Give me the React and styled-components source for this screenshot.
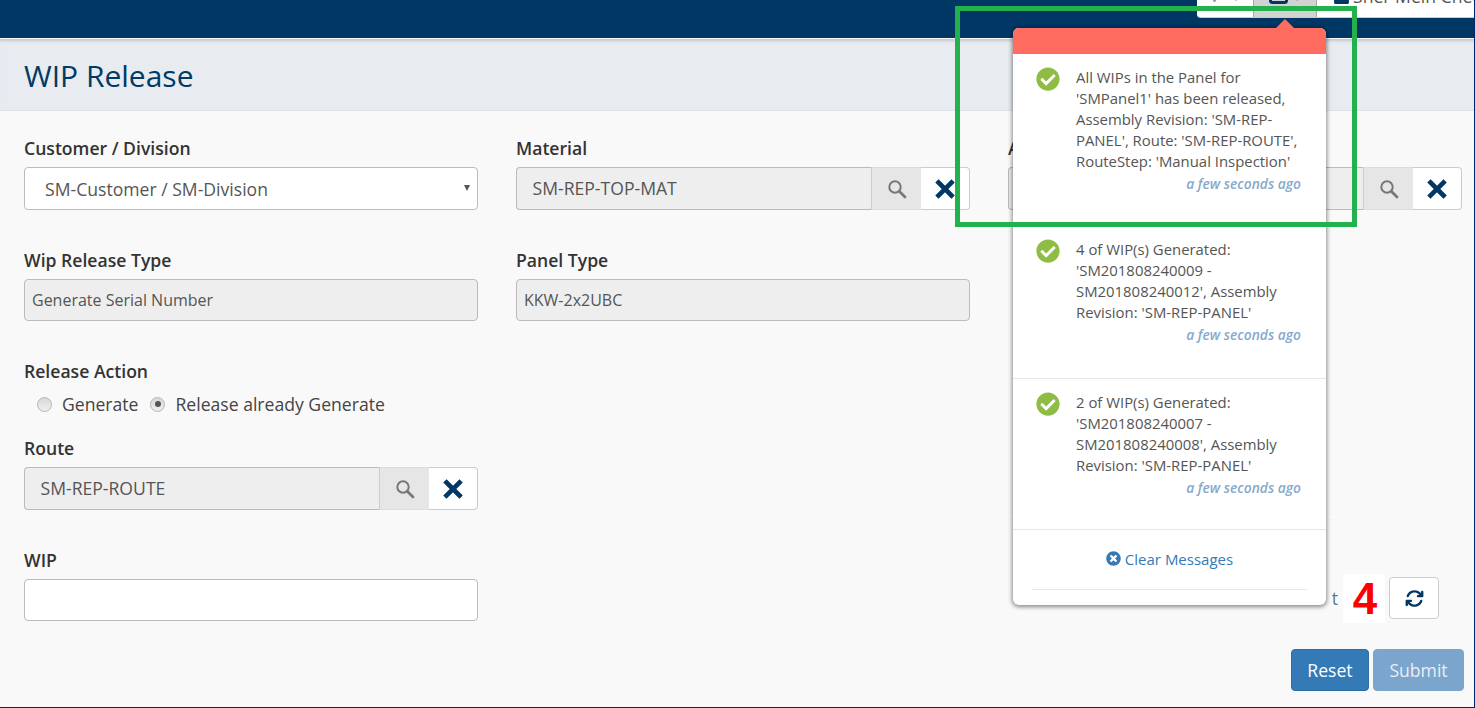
import React from "react";
import styled, { createGlobalStyle } from "styled-components";
import { FaCheckCircle, FaTimesCircle, FaUser } from "react-icons/fa";
import { FaArrowsRotate } from "react-icons/fa6";

const GlobalStyle = createGlobalStyle`
    html, body {
        margin: 0;
        padding: 0;
        height: 100%;
        background: #f9f9f9;
        overflow: hidden;
    }
    body {
        font-family: "Open Sans", "Liberation Sans", sans-serif;
        color: #333;
    }
`;

const Page = styled.div`
    position: relative;
    width: 1475px;
    height: 708px;
    box-sizing: border-box;
    overflow: hidden;
    background: #f9f9f9;
    border-right: 1px solid #00266b;
    border-bottom: 1px solid #00266b;
`;

const TopBar = styled.header`
    height: 38px;
    background: #003764;
    display: flex;
    justify-content: flex-end;
    align-items: flex-start;
`;

const NavBox = styled.nav`
    height: 18px;
    width: 277px;
    display: flex;
    background: #fff;
    border-radius: 0 0 0 4px;
    border-bottom: 1px solid #ccc;
    box-sizing: border-box;
    overflow: hidden;
`;

const NavTab = styled.div`
    width: ${(p) => p.$w}px;
    flex: none;
    display: flex;
    align-items: flex-start;
    justify-content: ${(p) => (p.$grow ? "flex-start" : "center")};
    gap: ${(p) => (p.$grow ? 3 : 7)}px;
    box-sizing: border-box;
    padding-left: ${(p) => (p.$grow ? 16 : 0)}px;
    background: ${(p) => (p.$active ? "#d2d2d2" : "#fff")};
    border-left: ${(p) => (p.$active ? "1px solid #aaa" : "none")};
    border-right: ${(p) => (p.$active ? "1px solid #aaa" : "none")};
    color: #003764;
    white-space: nowrap;
`;

const NavIconCut = styled.svg`
    flex: none;
    margin-top: ${(p) => p.$top}px;
`;

const NavUserText = styled.span`
    font-size: 17.6px;
    line-height: 18px;
    color: #555;
    margin-top: -13px;
`;

const TitleBar = styled.div`
    height: 72px;
    box-sizing: border-box;
    margin-top: 1px;
    padding: 16px 24px 0;
    background: #e8ebf0;
    border-top: 1px solid #c9ccd2;
    border-bottom: 1px solid #e0e2e6;
    box-shadow: inset 0 3px 3px -2px #c4c7cf;
`;

const Title = styled.h1`
    margin: 0;
    font-size: 30px;
    line-height: 40px;
    font-weight: 400;
    color: #003a66;
`;

const Form = styled.main`
    display: grid;
    grid-template-columns: repeat(3, 454px);
    column-gap: 38px;
    padding: 26px 0 0 24px;
`;

const Column = styled.div`
    display: flex;
    flex-direction: column;
`;

const Field = styled.div`
    height: ${(p) => p.$h}px;
    flex: none;
`;

const Label = styled.div`
    font-size: 17.6px;
    line-height: 22px;
    height: 22px;
    font-weight: 600;
    color: #333;
    margin-bottom: ${(p) => p.$mb ?? 8}px;
`;

const InputBase = styled.div`
    box-sizing: border-box;
    height: ${(p) => p.$h || 42}px;
    border: 1px solid #bbb;
    border-radius: 4px;
    display: flex;
    align-items: center;
    font-size: ${(p) => p.$fs || 17.6}px;
    color: #555;
    padding-left: ${(p) => p.$pl || 7}px;
    background: ${(p) => (p.$filled ? "#eee" : "#fff")};
`;

const SelectBox = styled(InputBase)`
    position: relative;
    padding-left: 20px;
`;

const Caret = styled.span`
    position: absolute;
    right: 7px;
    top: 17px;
    width: 0;
    height: 0;
    border-left: 3px solid transparent;
    border-right: 3px solid transparent;
    border-top: 6px solid #555;
`;

const LookupRow = styled.div`
    display: flex;
    height: 43px;
    box-sizing: border-box;
`;

const LookupInput = styled.div`
    flex: 1;
    min-width: 0;
    box-sizing: border-box;
    background: #eee;
    border: 1px solid #bbb;
    border-right: 1px solid #ccc;
    border-radius: 4px 0 0 4px;
    display: flex;
    align-items: center;
    padding: 0 0 1px 15.5px;
    font-size: 17.6px;
    color: #555;
`;

const SearchCell = styled.div`
    width: 49px;
    flex: none;
    box-sizing: border-box;
    background: #e6e6e6;
    border-top: 1px solid #ddd;
    border-bottom: 1px solid #ddd;
    display: flex;
    align-items: center;
    justify-content: center;
`;

const ClearCell = styled.div`
    width: 49px;
    flex: none;
    box-sizing: border-box;
    background: #fff;
    border: 1px solid #ccc;
    border-left: none;
    border-radius: 0 4px 4px 0;
    display: flex;
    align-items: center;
    justify-content: center;
`;

const RadioRow = styled.div`
    display: flex;
    align-items: center;
    padding-left: 13px;
    height: 22px;
    margin-top: 11px;
    margin-bottom: 22px;
    font-size: 17.6px;
    color: #444;
`;

const Radio = styled.span`
    width: 15px;
    height: 15px;
    box-sizing: border-box;
    border-radius: 50%;
    border: 1px solid #b5b5b5;
    background: linear-gradient(#d8d8d8, #efefef);
    margin-right: 10px;
    margin-left: ${(p) => p.$ml || 0}px;
    display: flex;
    align-items: center;
    justify-content: center;
    &::after {
        content: "";
        display: ${(p) => (p.$on ? "block" : "none")};
        width: 6px;
        height: 6px;
        border-radius: 50%;
        background: #555;
    }
`;

const RefreshRow = styled.div`
    display: flex;
    justify-content: flex-end;
    align-items: center;
    gap: 51px;
    padding-right: 23px;
`;

const CountText = styled.span`
    font-size: 17.6px;
    color: #5a7a94;
`;

const IconButton = styled.div`
    width: 50px;
    height: 42px;
    box-sizing: border-box;
    background: #fff;
    border: 1px solid #ccc;
    border-radius: 4px;
    display: flex;
    align-items: center;
    justify-content: center;
    color: #003764;
    font-size: 19px;
`;

const Actions = styled.div`
    display: flex;
    justify-content: flex-end;
    gap: 4px;
    margin-top: 30px;
    margin-right: -2px;
`;

const Button = styled.div`
    height: 42px;
    box-sizing: border-box;
    width: ${(p) => p.$w}px;
    padding-bottom: 1px;
    border-radius: 4px;
    background: ${(p) => (p.$off ? "#7ba5cc" : "#337ab7")};
    border: 1px solid ${(p) => (p.$off ? "#7ba5cc" : "#2e6da4")};
    color: ${(p) => (p.$off ? "#e8eff6" : "#fff")};
    font-size: 17.6px;
    display: flex;
    align-items: center;
    justify-content: center;
`;

const GlitchLine = styled.div`
    position: absolute;
    left: 1004px;
    top: 516px;
    width: 331px;
    height: 1px;
    background: #fff;
`;

const Popover = styled.aside`
    position: absolute;
    left: 1013px;
    top: 28px;
    width: 313px;
    height: 577px;
    background: #fff;
    border-radius: 6px;
    box-shadow: 0 1px 4px 1px rgba(0, 0, 0, 0.45);
    display: flex;
    flex-direction: column;
    &::before {
        content: "";
        position: absolute;
        left: 263px;
        top: -9px;
        border-left: 9px solid transparent;
        border-right: 9px solid transparent;
        border-bottom: 9px solid #ff6b5e;
    }
`;

const PopoverHead = styled.div`
    height: 26px;
    flex: none;
    background: #ff6b5e;
    border-radius: 6px 6px 0 0;
`;

const Message = styled.div`
    height: ${(p) => p.$h}px;
    flex: none;
    box-sizing: border-box;
    padding: 13px 25px 0 23px;
    display: flex;
    gap: 16px;
    border-bottom: 1px solid #e7e7e7;
`;

const CheckWrap = styled.div`
    flex: none;
    width: 24px;
    height: 24px;
    font-size: 24px;
    line-height: 0;
    color: #8fbc45;
`;

const MessageBody = styled.div`
    flex: 1;
    min-width: 0;
`;

const MessageText = styled.div`
    font-size: 14.9px;
    line-height: 21px;
    color: #555;
    white-space: pre-line;
`;

const TimeAgo = styled.div`
    text-align: right;
    font-size: 13.8px;
    line-height: 21px;
    margin-top: 1px;
    font-style: italic;
    font-weight: 600;
    color: #86a9cc;
`;

const ClearLink = styled.div`
    height: 60px;
    flex: none;
    margin: 0 19px;
    padding-bottom: 2px;
    box-sizing: border-box;
    border-bottom: 1px solid #e7e7e7;
    display: flex;
    align-items: center;
    justify-content: center;
    gap: 4px;
    font-size: 15px;
    color: #337ab7;
    svg {
        font-size: 15px;
    }
`;

const AnnotationBox = styled.div`
    position: absolute;
    left: 955px;
    top: 6px;
    width: 402px;
    height: 221px;
    box-sizing: border-box;
    border: 5px solid #22b14c;
`;

const StepBadge = styled.div`
    position: absolute;
    left: 1343px;
    top: 574px;
    width: 42px;
    height: 49px;
    padding-left: 2px;
    box-sizing: border-box;
    background: #fff;
    color: #f00;
    font-family: "Liberation Sans", sans-serif;
    font-weight: 700;
    font-size: 44px;
    line-height: 49px;
    text-align: center;
`;

const messages = [
    {
        h: 172,
        text: "All WIPs in the Panel for\n'SMPanel1' has been released,\nAssembly Revision: 'SM-REP-\nPANEL', Route: 'SM-REP-ROUTE',\nRouteStep: 'Manual Inspection'",
    },
    {
        h: 153,
        text: "4 of WIP(s) Generated:\n'SM201808240009 -\nSM201808240012', Assembly\nRevision: 'SM-REP-PANEL'",
    },
    {
        h: 151,
        text: "2 of WIP(s) Generated:\n'SM201808240007 -\nSM201808240008', Assembly\nRevision: 'SM-REP-PANEL'",
    },
];

function SearchIcon() {
    return (
        <svg width="20" height="20" viewBox="0 0 20 20" fill="none" stroke="#777">
            <circle cx="8" cy="8" r="5.7" strokeWidth="2" />
            <path d="M12.5 12.5 L18 18" strokeWidth="2.8" strokeLinecap="round" />
        </svg>
    );
}

function CrossIcon() {
    return (
        <svg width="20" height="20" viewBox="0 0 20 20" fill="none" stroke="#003764">
            <path d="M3.5 3.5 L16.5 16.5 M16.5 3.5 L3.5 16.5" strokeWidth="4.6" strokeLinecap="square" />
        </svg>
    );
}

function Lookup({ value }) {
    return (
        <LookupRow>
            <LookupInput>{value}</LookupInput>
            <SearchCell>
                <SearchIcon />
            </SearchCell>
            <ClearCell>
                <CrossIcon />
            </ClearCell>
        </LookupRow>
    );
}

export default function App() {
    return (
        <Page>
            <GlobalStyle />
            <TopBar>
                <NavBox>
                    <NavTab $w={56}>
                        {/* only the bottom tips of these icons show above the fold */}
                        <NavIconCut $top={-7} width="8" height="9" viewBox="0 0 8 9" style={{ marginRight: 8 }}>
                            <rect x="2" y="0" width="3" height="9" rx="1.5" fill="#7fa6cc" />
                        </NavIconCut>
                        <NavIconCut $top={-8} width="6" height="9" viewBox="0 0 6 9">
                            <rect x="1" y="0" width="2" height="9" fill="#ccc" />
                        </NavIconCut>
                    </NavTab>
                    <NavTab $w={64} $active>
                        <NavIconCut $top={-10} width="19" height="14" viewBox="0 0 19 14">
                            <rect x="1.5" y="1.5" width="16" height="11" rx="2" fill="none" stroke="#003764" strokeWidth="3" />
                        </NavIconCut>
                        <NavIconCut $top={-8} width="6" height="9" viewBox="0 0 6 9">
                            <rect x="1" y="0" width="2" height="9" fill="#b5b5b5" />
                        </NavIconCut>
                    </NavTab>
                    <NavTab $w={157} $grow>
                        <FaUser size={17} style={{ marginTop: -13, flex: "none" }} />
                        <NavUserText>Sher Mein Check</NavUserText>
                    </NavTab>
                </NavBox>
            </TopBar>
            <TitleBar>
                <Title>WIP Release</Title>
            </TitleBar>
            <Form>
                <Column>
                    <Field $h={112}>
                        <Label>Customer / Division</Label>
                        <SelectBox $h={43}>
                            SM-Customer / SM-Division
                            <Caret />
                        </SelectBox>
                    </Field>
                    <Field $h={111}>
                        <Label>Wip Release Type</Label>
                        <InputBase $filled $fs={16}>
                            Generate Serial Number
                        </InputBase>
                    </Field>
                    <Label $mb={0}>Release Action</Label>
                    <RadioRow>
                        <Radio />
                        Generate
                        <Radio $ml={12} $on />
                        Release already Generate
                    </RadioRow>
                    <Field $h={112}>
                        <Label>Route</Label>
                        <Lookup value="SM-REP-ROUTE" />
                    </Field>
                    <Field>
                        <Label>WIP</Label>
                        <InputBase />
                    </Field>
                </Column>
                <Column>
                    <Field $h={112}>
                        <Label>Material</Label>
                        <Lookup value="SM-REP-TOP-MAT" />
                    </Field>
                    <Field $h={111}>
                        <Label>Panel Type</Label>
                        <InputBase $filled $fs={16}>
                            KKW-2x2UBC
                        </InputBase>
                    </Field>
                </Column>
                <Column>
                    <Field $h={112}>
                        <Label>Assembly Revision</Label>
                        <Lookup value="SM-REP-PANEL" />
                    </Field>
                    <Field $h={328} />
                    <RefreshRow>
                        <CountText>t</CountText>
                        <IconButton>
                            <FaArrowsRotate />
                        </IconButton>
                    </RefreshRow>
                    <Actions>
                        <Button $w={78}>Reset</Button>
                        <Button $w={91} $off>
                            Submit
                        </Button>
                    </Actions>
                </Column>
            </Form>
            <GlitchLine />
            <Popover>
                <PopoverHead />
                {messages.map((m, i) => (
                    <Message key={i} $h={m.h}>
                        <CheckWrap>
                            <FaCheckCircle />
                        </CheckWrap>
                        <MessageBody>
                            <MessageText>{m.text}</MessageText>
                            <TimeAgo>a few seconds ago</TimeAgo>
                        </MessageBody>
                    </Message>
                ))}
                <ClearLink>
                    <FaTimesCircle />
                    Clear Messages
                </ClearLink>
            </Popover>
            <AnnotationBox />
            <StepBadge>4</StepBadge>
        </Page>
    );
}
